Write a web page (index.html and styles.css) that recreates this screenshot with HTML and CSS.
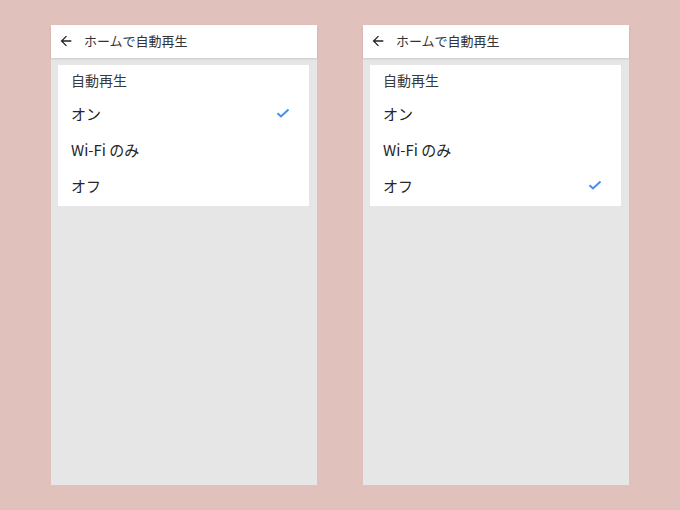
FILE: index.html
```html
<!DOCTYPE html>
<html lang="ja">
<head>
<meta charset="utf-8">
<link rel="stylesheet" href="styles.css">
</head>
<body>
<div class="stage">
  <div class="phone">
    <div class="header">
      <svg class="back" viewBox="0 0 24 24" width="16" height="16"><path d="M20 11H7.83l5.59-5.59L12 4l-8 8 8 8 1.41-1.41L7.83 13H20v-2z" fill="#222"/></svg>
      <span class="htitle">ホームで自動再生</span>
    </div>
    <div class="card">
      <div class="ctitle">自動再生</div>
      <div class="row"><span>オン</span><svg class="check" viewBox="0 0 14 10" width="14" height="10"><path d="M1.5 5.2 5 8.5 12.5 1.5" fill="none" stroke="#4a8fe7" stroke-width="2"/></svg></div>
      <div class="row"><span>Wi-Fi のみ</span></div>
      <div class="row"><span>オフ</span></div>
    </div>
  </div>
  <div class="phone">
    <div class="header">
      <svg class="back" viewBox="0 0 24 24" width="16" height="16"><path d="M20 11H7.83l5.59-5.59L12 4l-8 8 8 8 1.41-1.41L7.83 13H20v-2z" fill="#222"/></svg>
      <span class="htitle">ホームで自動再生</span>
    </div>
    <div class="card">
      <div class="ctitle">自動再生</div>
      <div class="row"><span>オン</span></div>
      <div class="row"><span>Wi-Fi のみ</span></div>
      <div class="row"><span>オフ</span><svg class="check" viewBox="0 0 14 10" width="14" height="10"><path d="M1.5 5.2 5 8.5 12.5 1.5" fill="none" stroke="#4a8fe7" stroke-width="2"/></svg></div>
    </div>
  </div>
</div>
</body>
</html>
```
FILE: styles.css
```css
html, body {
  margin: 0;
  padding: 0;
}
body {
  width: 680px;
  height: 510px;
  background: #e1c1bc;
  font-family: "Noto Sans CJK JP", "Noto Sans", sans-serif;
  color: #333;
  overflow: hidden;
}
.stage {
  display: flex;
  gap: 46px;
  padding: 25px 0 0 51px;
}
.phone {
  width: 266px;
  height: 460px;
  background: #e6e6e6;
  display: flex;
  flex-direction: column;
}
.header {
  height: 33px;
  background: #fff;
  display: flex;
  align-items: center;
  padding-left: 7px;
  padding-bottom: 1px;
  box-sizing: border-box;
  box-shadow: 0 1px 2px rgba(0,0,0,0.12);
  position: relative;
}
.back {
  display: block;
}
.htitle {
  margin-left: 10px;
  font-size: 13px;
  line-height: 16px;
  color: #333;
}
.card {
  margin: 7px 8px 0 7px;
  background: #fff;
  padding-bottom: 3px;
}
.ctitle {
  height: 30px;
  line-height: 30px;
  padding-left: 13px;
  font-size: 14px;
  color: #3a3a3a;
}
.row {
  height: 36px;
  display: flex;
  align-items: center;
  justify-content: space-between;
  padding: 0 19px 0 13px;
  font-size: 15px;
  color: #262626;
}
.check {
  display: block;
}
```
